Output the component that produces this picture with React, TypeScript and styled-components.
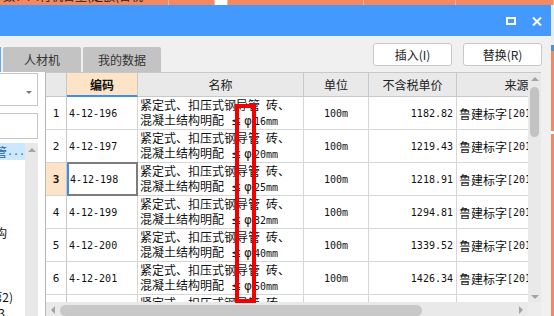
import React from 'react';
import styled, { createGlobalStyle, css } from 'styled-components';

const CJK = `"Noto Sans CJK SC", "Noto Sans", sans-serif`;
const MONO = `"DejaVu Sans Mono", "Liberation Mono", monospace`;

const GlobalStyle = createGlobalStyle`
  html, body { margin: 0; padding: 0; }
  body {
    width: 554px;
    height: 316px;
    overflow: hidden;
    background: #f4895f;
    font-family: ${CJK};
  }
  *, *::before, *::after { box-sizing: border-box; }
`;

const Page = styled.div`
  position: relative;
  width: 554px;
  height: 316px;
  overflow: hidden;
  display: flex;
  flex-direction: column;
`;

/* ---------- background strip above the dialog ---------- */
const TopStrip = styled.div`
  height: 5px;
  display: flex;
  background: #f4895f;
  overflow: hidden;
`;

const StripCell = styled.div<{ $w: number; $white?: boolean }>`
  width: ${(p) => p.$w}px;
  flex: none;
  height: 5px;
  border-right: 1px solid #e7b9a6;
  background: ${(p) => (p.$white ? '#ffffff' : 'transparent')};
  overflow: hidden;
  padding-left: 3px;
`;

const StripText = styled.div`
  margin-top: -10px;
  font-size: 12px;
  line-height: 12px;
  color: #222;
  white-space: nowrap;
`;

const StripNum = styled(StripText)`
  font-family: ${MONO};
  font-size: 11px;
  padding-left: 2px;
`;

const MainRow = styled.div`
  flex: 1;
  display: flex;
  min-height: 0;
`;

const RightEdge = styled.div`
  flex: 1;
  display: flex;
  flex-direction: column;
`;

const EdgeBit = styled.div<{ $h: number; $c: string }>`
  height: ${(p) => p.$h}px;
  background: ${(p) => p.$c};
  flex: none;
`;

/* ---------- dialog ---------- */
const Dialog = styled.div`
  width: 551px;
  flex: none;
  display: flex;
  flex-direction: column;
  background: #f0f0f0;
`;

const TitleBar = styled.div`
  height: 31px;
  flex: none;
  background: #4499fe;
  display: flex;
  align-items: center;
  justify-content: flex-end;
  gap: 16px;
  padding: 1px 9px 0 0;
`;

const MaxIcon = styled.div`
  width: 10px;
  height: 8px;
  border: 2px solid #ffffff;
`;

const Toolbar = styled.div`
  height: 36px;
  flex: none;
  display: flex;
  padding-right: 9px;
`;

const TabRow = styled.div`
  align-self: flex-end;
  display: flex;
  gap: 2px;
  height: 25px;
`;

const TabStub = styled.div`
  width: 1px;
  background: #62a8f3;
`;

const Tab = styled.div`
  width: 78px;
  height: 25px;
  background: #c3c3c3;
  border-radius: 2px 2px 0 0;
  display: flex;
  align-items: center;
  justify-content: center;
  font-size: 12px;
  color: #333;
`;

const ButtonRow = styled.div`
  margin-left: auto;
  margin-top: 7px;
  align-self: flex-start;
  display: flex;
  gap: 11px;
`;

const Button = styled.div`
  width: 79px;
  height: 23px;
  background: #ffffff;
  border: 1px solid #c9c9c9;
  border-radius: 3px;
  display: flex;
  align-items: center;
  justify-content: center;
  font-size: 12px;
  color: #222;
`;

const Content = styled.div`
  flex: 1;
  min-height: 0;
  display: flex;
`;

/* ---------- left panel ---------- */
const LeftPanel = styled.div`
  width: 45px;
  flex: none;
  background: #ffffff;
  overflow: hidden;
  display: flex;
  flex-direction: column;
  padding: 1px 7px 0 0;
`;

const SelectBox = styled.div`
  height: 33px;
  flex: none;
  margin-left: -10px;
  border: 1px solid #c6c6c6;
  display: flex;
  justify-content: flex-end;
  align-items: center;
  padding: 6px 5px 0 0;
`;

const Caret = styled.div`
  width: 0;
  height: 0;
  border-left: 3px solid transparent;
  border-right: 3px solid transparent;
  border-top: 3px solid #7a7a7a;
`;

const InputBox = styled.div`
  height: 26px;
  flex: none;
  margin: 7px 0 0 -10px;
  border: 1px solid #c6c6c6;
`;

const ListArea = styled.div`
  flex: 1;
  min-height: 0;
  margin-top: 4px;
  display: flex;
`;

const ListViewport = styled.div`
  width: 25px;
  flex: none;
  overflow: hidden;
  display: flex;
  flex-direction: column;
`;

const ListItem = styled.div<{ $selected?: boolean; $pad?: number }>`
  height: ${(p) => (p.$selected ? 17 : 16)}px;
  flex: none;
  display: flex;
  justify-content: flex-end;
  align-items: center;
  white-space: nowrap;
  font-size: 12px;
  color: #111;
  padding-right: ${(p) => p.$pad ?? 0}px;
  ${(p) =>
    p.$selected &&
    css`
      background: #cce8ff;
      color: #1a5fc0;
    `}
`;

const Dots = styled.span`
  font-family: ${MONO};
  font-size: 10px;
  letter-spacing: 0;
`;

const ArrowUp = styled.div`
  width: 0;
  height: 0;
  flex: none;
  border-left: 4px solid transparent;
  border-right: 4px solid transparent;
  border-bottom: 4px solid #a3a3a3;
`;

const ArrowDown = styled(ArrowUp)`
  border-bottom: none;
  border-top: 4px solid #a3a3a3;
`;

const ArrowLeft = styled.div`
  width: 0;
  height: 0;
  flex: none;
  border-top: 4px solid transparent;
  border-bottom: 4px solid transparent;
  border-right: 4px solid #a3a3a3;
`;

const ArrowRight = styled(ArrowLeft)`
  border-right: none;
  border-left: 4px solid #a3a3a3;
`;

const LeftScroll = styled.div`
  width: 13px;
  flex: none;
  background: #e8e8e8;
  display: flex;
  flex-direction: column;
  align-items: center;
  padding-top: 5px;
`;

/* ---------- grid ---------- */
const GridArea = styled.div`
  width: 496px;
  flex: none;
  border-left: 1px solid #b6b6b6;
  border-top: 1px solid #c8c8c8;
  display: flex;
  flex-direction: column;
`;

const ViewRow = styled.div`
  height: 229px;
  flex: none;
  display: flex;
`;

const TableClip = styled.div`
  width: 482px;
  flex: none;
  overflow: hidden;
  background: #ffffff;
`;

const Table = styled.div`
  display: grid;
  grid-template-columns: 21px 71px 166px 65px 88px 120px;
  grid-template-rows: 24px;
  grid-auto-rows: 33px;
  width: 531px;
`;

const HeaderCell = styled.div<{ $active?: boolean }>`
  background: #e9e9e9;
  border-right: 1px solid #c8c8c8;
  border-bottom: 1px solid #c8c8c8;
  display: flex;
  align-items: center;
  justify-content: center;
  font-size: 12px;
  color: #222;
  white-space: nowrap;
  overflow: hidden;
  ${(p) =>
    p.$active &&
    css`
      background: #fde4c6;
      font-weight: 700;
      color: #111;
      border-bottom: 2px solid #3c8ee8;
    `}
`;

const Cell = styled.div`
  background: #ffffff;
  border-right: 1px solid #d6d6d6;
  border-bottom: 1px solid #d6d6d6;
  overflow: hidden;
  white-space: nowrap;
  color: #111;
`;

const RowNum = styled(Cell)<{ $selected?: boolean }>`
  display: flex;
  align-items: center;
  justify-content: center;
  font-family: ${MONO};
  font-size: 11px;
  border-right-color: #c8c8c8;
  ${(p) =>
    p.$selected &&
    css`
      background: #fde4c6;
      font-weight: 700;
    `}
`;

const CodeCell = styled(Cell)<{ $selected?: boolean }>`
  display: flex;
  align-items: center;
  padding-left: 2px;
  font-family: ${MONO};
  font-size: 10px;
  ${(p) =>
    p.$selected &&
    css`
      border: 2px solid #7d7d7d;
      border-left-color: #3c8ee8;
      padding-left: 1px;
      margin-top: -1px;
    `}
`;

const NameCell = styled(Cell)`
  padding-left: 2px;
  font-size: 12px;
  line-height: 15px;
`;

const NameLine = styled.div`
  height: 15px;
  white-space: nowrap;
`;

const Half = styled.span`
  display: inline-block;
  width: 6px;
`;

const Wide = styled.span`
  display: inline-block;
  width: 12px;
  text-align: center;
  font-family: "DejaVu Sans", ${CJK};
  font-size: 12px;
  color: #111;
`;

const Mono = styled.span`
  font-family: ${MONO};
  font-size: 10px;
`;

const UnitCell = styled(Cell)`
  display: flex;
  align-items: center;
  justify-content: center;
  font-family: ${MONO};
  font-size: 10px;
`;

const PriceCell = styled(Cell)`
  display: flex;
  align-items: center;
  justify-content: flex-end;
  padding-right: 3px;
  font-family: ${MONO};
  font-size: 10px;
`;

const SourceCell = styled(Cell)`
  display: flex;
  align-items: center;
  padding-left: 2px;
  font-size: 12px;
`;

const VScroll = styled.div`
  width: 13px;
  flex: none;
  background: #e9e9e9;
  display: flex;
  flex-direction: column;
  align-items: center;
  padding: 4px 0 3px;
`;

const VThumb = styled.div`
  width: 9px;
  height: 50px;
  margin-top: 6px;
  border-radius: 5px;
  background: #c2c2c2;
`;

const Spacer = styled.div`
  flex: 1;
`;

const HScrollRow = styled.div`
  flex: 1;
  display: flex;
`;

const HScroll = styled.div`
  width: 482px;
  flex: none;
  background: #e9e9e9;
  display: flex;
  align-items: center;
  padding: 1px 5px 0 5px;
`;

const HThumb = styled.div<{ $w: number }>`
  width: ${(p) => p.$w}px;
  height: 11px;
  margin: 2px 0 0 5px;
  border-radius: 6px;
  background: #c8c8c8;
`;

const Corner = styled.div`
  flex: 1;
  background: #ededed;
`;

const RightPad = styled.div`
  width: 10px;
  flex: none;
`;

const Annotation = styled.div`
  position: absolute;
  left: 235px;
  top: 104px;
  width: 21px;
  height: 199px;
  border: 4px solid #f20000;
  pointer-events: none;
`;

type Row = { code: string; size: string; unit: string; price: string };

const rows: Row[] = [
  { code: '4-12-196', size: '16mm', unit: '100m', price: '1182.82' },
  { code: '4-12-197', size: '20mm', unit: '100m', price: '1219.43' },
  { code: '4-12-198', size: '25mm', unit: '100m', price: '1218.91' },
  { code: '4-12-199', size: '32mm', unit: '100m', price: '1294.81' },
  { code: '4-12-200', size: '40mm', unit: '100m', price: '1339.52' },
  { code: '4-12-201', size: '50mm', unit: '100m', price: '1426.34' },
  { code: '4-12-202', size: '65mm', unit: '100m', price: '1637.07' },
];

const CloseIcon = () => (
  <svg width="10" height="9" viewBox="0 0 10 9">
    <path d="M1 0.5 L9 8.5 M9 0.5 L1 8.5" stroke="#ffffff" strokeWidth="2" />
  </svg>
);

export default function App() {
  return (
    <>
      <GlobalStyle />
      <Page>
        <TopStrip>
          <StripCell $w={169}>
            <StripText>数：人材机含量(定额(含税</StripText>
          </StripCell>
          <StripCell $w={46} />
          <StripCell $w={13} $white />
          <StripCell $w={136} />
          <StripCell $w={92}>
            <StripText>　　　　　-</StripText>
          </StripCell>
          <StripCell $w={98}>
            <StripNum>461. 76</StripNum>
          </StripCell>
        </TopStrip>
        <MainRow>
          <Dialog>
            <TitleBar>
              <MaxIcon />
              <CloseIcon />
            </TitleBar>
            <Toolbar>
              <TabRow>
                <TabStub />
                <Tab>人材机</Tab>
                <Tab>我的数据</Tab>
              </TabRow>
              <ButtonRow>
                <Button>插入(I)</Button>
                <Button>替换(R)</Button>
              </ButtonRow>
            </Toolbar>
            <Content>
              <LeftPanel>
                <SelectBox>
                  <Caret />
                </SelectBox>
                <InputBox />
                <ListArea>
                  <ListViewport>
                    <ListItem $selected>
                      导管<Dots>...</Dots>
                    </ListItem>
                    <ListItem />
                    <ListItem />
                    <ListItem />
                    <ListItem />
                    <ListItem $pad={18}>结构</ListItem>
                    <ListItem />
                    <ListItem />
                    <ListItem />
                    <ListItem $pad={12}>第2)</ListItem>
                    <ListItem $pad={20}>3</ListItem>
                  </ListViewport>
                  <LeftScroll>
                    <ArrowUp />
                  </LeftScroll>
                </ListArea>
              </LeftPanel>
              <GridArea>
                <ViewRow>
                  <TableClip>
                    <Table>
                      <HeaderCell />
                      <HeaderCell $active>编码</HeaderCell>
                      <HeaderCell>名称</HeaderCell>
                      <HeaderCell>单位</HeaderCell>
                      <HeaderCell>不含税单价</HeaderCell>
                      <HeaderCell>来源</HeaderCell>
                      {rows.map((r, i) => {
                        const selected = i === 2;
                        return (
                          <React.Fragment key={r.code}>
                            <RowNum $selected={selected}>{i + 1}</RowNum>
                            <CodeCell $selected={selected}>{r.code}</CodeCell>
                            <NameCell>
                              <NameLine>
                                紧定式、扣压式钢导管<Half />砖、
                              </NameLine>
                              <NameLine>
                                混凝土结构明配<Half />
                                <Wide>≤</Wide>
                                <Wide>φ</Wide>
                                <Mono>{r.size}</Mono>
                              </NameLine>
                            </NameCell>
                            <UnitCell>{r.unit}</UnitCell>
                            <PriceCell>{r.price}</PriceCell>
                            <SourceCell>
                              鲁建标字<Mono>[2016]</Mono>
                            </SourceCell>
                          </React.Fragment>
                        );
                      })}
                    </Table>
                  </TableClip>
                  <VScroll>
                    <ArrowUp />
                    <VThumb />
                    <Spacer />
                    <ArrowDown />
                  </VScroll>
                </ViewRow>
                <HScrollRow>
                  <HScroll>
                    <ArrowLeft />
                    <HThumb $w={362} />
                    <Spacer />
                    <ArrowRight />
                  </HScroll>
                  <Corner />
                </HScrollRow>
              </GridArea>
              <RightPad />
            </Content>
          </Dialog>
          <RightEdge>
            <EdgeBit $h={40} $c="#e9eef5" />
            <EdgeBit $h={6} $c="#4a8fe0" />
            <EdgeBit $h={80} $c="#f4895f" />
            <EdgeBit $h={3} $c="#ffffff" />
            <EdgeBit $h={200} $c="#f4895f" />
          </RightEdge>
        </MainRow>
        <Annotation />
      </Page>
    </>
  );
}
